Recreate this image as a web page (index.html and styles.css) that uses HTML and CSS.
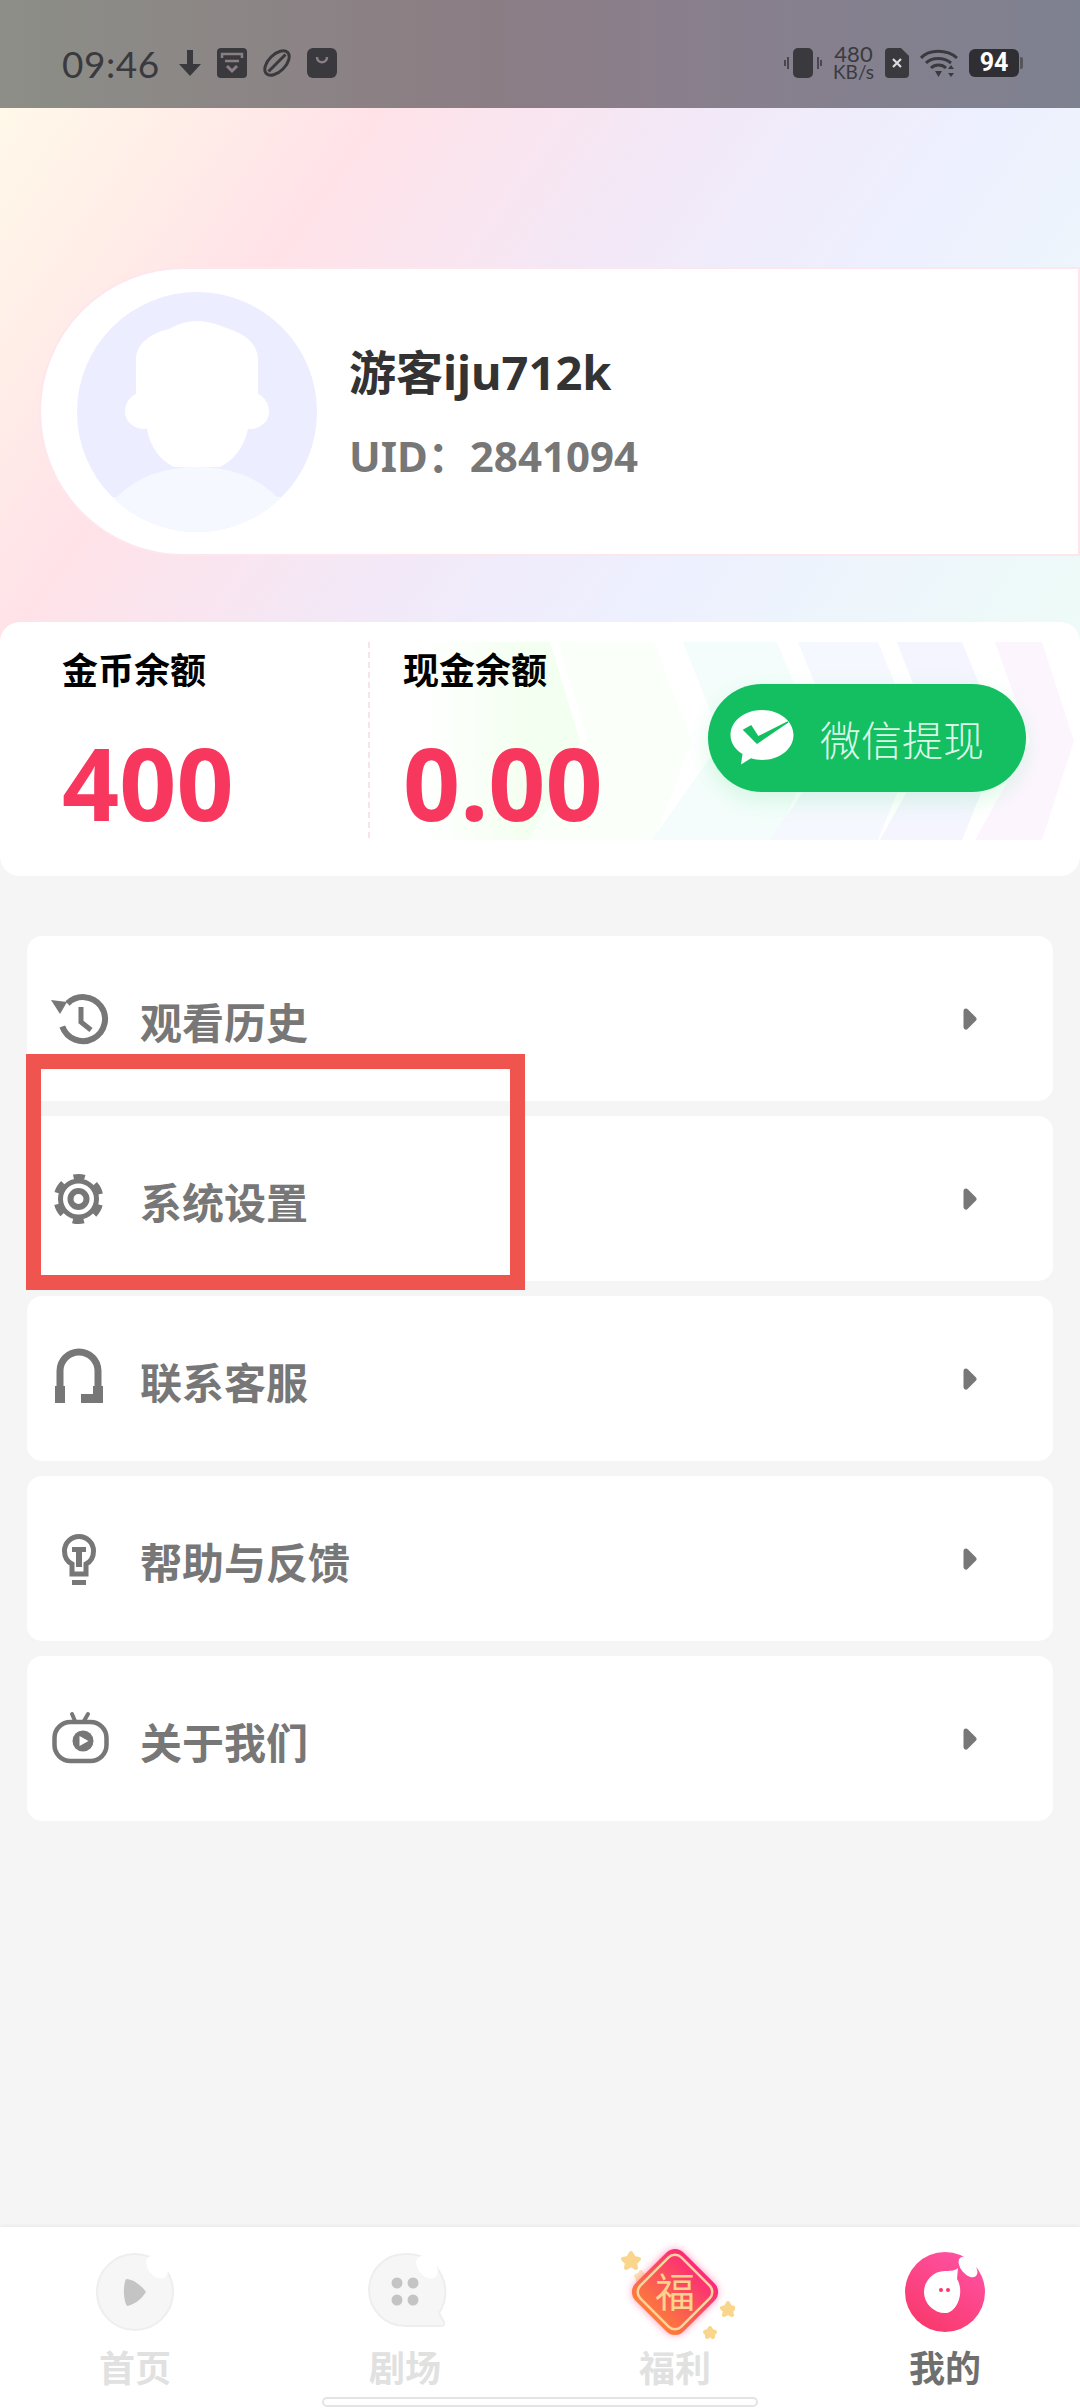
FILE: index.html
```html
<!DOCTYPE html>
<html lang="zh-CN">
<head>
  <meta charset="UTF-8" />
  <meta name="viewport" content="width=device-width, initial-scale=1.0"/>
  <title>我的</title>
  <link rel="stylesheet" href="styles.css">
</head>
<body>
  <!-- Status bar -->
  <header class="status-bar">
    <div class="status-left">
      <span class="clock">09:46</span>
      <svg class="st-icon" width="24" height="28" viewBox="0 0 24 28"><path d="M9 1h6v14h8L12 27 1 15h8z"/></svg>
      <svg class="st-icon" width="30" height="30" viewBox="0 0 30 30"><rect width="30" height="30" rx="4"/><path d="M5 10V6h20v4M8 13h14" fill="none" stroke="#8a7f85" stroke-width="2.5"/><path d="M10 18l5 5 5-5" fill="none" stroke="#8a7f85" stroke-width="3"/></svg>
      <svg class="st-icon" width="30" height="30" viewBox="0 0 30 30"><g transform="rotate(-45 15 15)"><ellipse cx="15" cy="15" rx="15" ry="8.5" fill="none" stroke="#3a3a3e" stroke-width="3"/><path d="M3 15h24" stroke="#3a3a3e" stroke-width="3"/></g></svg>
      <svg class="st-icon" width="30" height="30" viewBox="0 0 30 30"><rect width="30" height="30" rx="6"/><path d="M10 9c0 7 10 7 10 0" fill="none" stroke="#8a7f85" stroke-width="2.5"/></svg>
    </div>
    <div class="status-right">
      <svg class="st-icon" width="38" height="30" viewBox="0 0 38 30"><rect x="9" width="20" height="30" rx="5"/><path d="M4 9v12M1 12v6M34 9v12M37 12v6" stroke="#3a3a3e" stroke-width="1.6"/></svg>
      <div class="net-speed"><span>480</span><span class="net-unit">KB/s</span></div>
      <svg class="st-icon" width="24" height="30" viewBox="0 0 24 30"><path d="M4 0h12l8 8v18a4 4 0 0 1-4 4H4a4 4 0 0 1-4-4V4a4 4 0 0 1 4-4z"/><path d="M8 11l8 8M16 11l-8 8" stroke="#dcdcdc" stroke-width="2.2"/></svg>
      <svg class="st-icon" width="38" height="30" viewBox="0 0 38 30"><g fill="none" stroke="#3a3a3e" stroke-width="3"><path d="M1 10c8-9 26-9 36 0"/><path d="M6 15c6-6 18-6 25 0"/><path d="M11 20c4-4 11-4 15 0"/></g><path d="M15 23h7l-3.5 6zM31 17l3 4h-6zM31 29l3-4h-6z"/></svg>
      <div class="battery"><span>94</span></div>
    </div>
  </header>

  <!-- Profile header -->
  <section class="hero">
    <div class="user-card">
      <svg class="avatar" width="240" height="240" viewBox="0 0 240 240">
        <defs><clipPath id="avatarClip"><circle cx="120" cy="120" r="120"/></clipPath></defs>
        <circle cx="120" cy="120" r="120" fill="#eceeff"/>
        <g clip-path="url(#avatarClip)">
          <path d="M0 240V205H40Q70 175 120 175T200 205H240V240Z" fill="#f6f8ff"/>
        </g>
        <path d="M120 29C108 29 100 33 92 37C72 42 59 52 59 68V102C52 105 48 112 48 120C48 130 58 138 70 137C73 155 83 168 97 175H143C157 168 167 155 171 137C182 138 192 130 192 120C192 112 188 105 181 102V68C181 52 168 42 152 37C142 33 132 29 120 29Z" fill="#fff"/>
      </svg>
      <div class="user-info">
        <h1 class="user-name">游客iju712k</h1>
        <p class="user-id">UID：2841094</p>
      </div>
    </div>
  </section>

  <!-- Balances -->
  <section class="wallet">
    <svg class="wallet-bg" width="660" height="198" viewBox="0 0 660 198">
      <defs>
        <linearGradient id="fadeGreen" x1="0" x2="1"><stop offset="0" stop-color="#f4fff1" stop-opacity="0"/><stop offset="0.7" stop-color="#f3fff0"/></linearGradient>
      </defs>
      <polygon points="0,0 130,0 160,99 118,198 0,198" fill="url(#fadeGreen)"/>
      <polygon points="138,0 234,0 272,99 234,198 108,198 168,99" fill="#fafffa"/>
      <polygon points="263,0 357,0 397,99 357,198 232,198 302,99" fill="#f4fdfb"/>
      <polygon points="378,0 458,0 498,99 458,198 350,198 418,99" fill="#f5f8fe"/>
      <polygon points="477,0 542,0 582,99 542,198 460,198 515,99" fill="#f4f5fe"/>
      <polygon points="575,0 622,0 654,99 622,198 555,198 610,99" fill="#fdf5fe"/>
    </svg>
    <div class="balance">
      <div class="balance-label">金币余额</div>
      <div class="balance-value">400</div>
    </div>
    <div class="balance balance-cash">
      <div class="balance-label">现金余额</div>
      <div class="balance-value">0.00</div>
    </div>
    <button class="wechat-btn" type="button">
      <svg width="64" height="56" viewBox="0 0 64 56">
        <path d="M32 0C49.500 0 63.500 11 63.500 25S49.500 50 32 50C28 50 24.500 49.500 21 48.300L11 54.500L12.500 44C5 39.500 .5 32.700 .5 25C.5 11 14.500 0 32 0Z" fill="#fff"/>
        <path d="M14 20L27 33L58 12L28 27L21 16Z" fill="#13bf61" stroke="#13bf61" stroke-width="1.500"/>
      </svg>
      <span>微信提现</span>
    </button>
  </section>

  <!-- Menu -->
  <ul class="menu">
    <li class="menu-item">
      <svg class="menu-icon" width="64" height="64" viewBox="0 0 64 64">
        <path d="M16.500 16.500A22 22 0 1 1 11.300 39.500" fill="none" stroke="#777" stroke-width="6"/>
        <polygon points="0,13 16,15 9,27" fill="#777"/>
        <path d="M30 20V35L40 43" fill="none" stroke="#777" stroke-width="5"/>
      </svg>
      <span class="menu-text">观看历史</span>
      <svg class="menu-arrow" width="14" height="22" viewBox="0 0 14 22"><path d="M3 3l8 8-8 8z" fill="#777" stroke="#777" stroke-width="5" stroke-linejoin="round"/></svg>
    </li>
    <li class="menu-item">
      <svg class="menu-icon" width="64" height="64" viewBox="0 0 64 64">
        <g fill="none" stroke="#777">
          <circle cx="27.500" cy="32" r="18" stroke-width="5"/>
          <circle cx="27.500" cy="32" r="22.500" stroke-width="5" stroke-dasharray="11.500 12.060" stroke-dashoffset="-6"/>
          <circle cx="27.500" cy="32" r="8" stroke-width="6"/>
        </g>
      </svg>
      <span class="menu-text">系统设置</span>
      <svg class="menu-arrow" width="14" height="22" viewBox="0 0 14 22"><path d="M3 3l8 8-8 8z" fill="#777" stroke="#777" stroke-width="5" stroke-linejoin="round"/></svg>
    </li>
    <li class="menu-item">
      <svg class="menu-icon" width="64" height="64" viewBox="0 0 64 64">
        <path d="M9 42V24A19 19 0 0 1 47 24V46" fill="none" stroke="#777" stroke-width="7"/>
        <path d="M4 39H14V56H4ZM42 39H52V56H30V47H42Z" fill="#777"/>
      </svg>
      <span class="menu-text">联系客服</span>
      <svg class="menu-arrow" width="14" height="22" viewBox="0 0 14 22"><path d="M3 3l8 8-8 8z" fill="#777" stroke="#777" stroke-width="5" stroke-linejoin="round"/></svg>
    </li>
    <li class="menu-item">
      <svg class="menu-icon" width="64" height="64" viewBox="0 0 64 64">
        <path d="M21 37C15 34 13.500 29 13.500 24A14.500 14.500 0 0 1 42.500 24C42.500 29 41 34 35 37V47H21Z" fill="none" stroke="#777" stroke-width="5"/>
        <path d="M21 20H35V25H31V40H25V25H21ZM21 53H35V58H21Z" fill="#777"/>
      </svg>
      <span class="menu-text">帮助与反馈</span>
      <svg class="menu-arrow" width="14" height="22" viewBox="0 0 14 22"><path d="M3 3l8 8-8 8z" fill="#777" stroke="#777" stroke-width="5" stroke-linejoin="round"/></svg>
    </li>
    <li class="menu-item">
      <svg class="menu-icon" width="64" height="64" viewBox="0 0 64 64">
        <rect x="3.500" y="15" width="52" height="39" rx="16" fill="none" stroke="#777" stroke-width="4.500"/>
        <path d="M24 14L21 7M33 14L37 7" stroke="#777" stroke-width="4" stroke-linecap="round"/>
        <circle cx="32" cy="34" r="10.500" fill="#777"/>
        <path d="M28.500 29L37.500 34L28.500 39Z" fill="#fff"/>
      </svg>
      <span class="menu-text">关于我们</span>
      <svg class="menu-arrow" width="14" height="22" viewBox="0 0 14 22"><path d="M3 3l8 8-8 8z" fill="#777" stroke="#777" stroke-width="5" stroke-linejoin="round"/></svg>
    </li>
  </ul>

  <!-- Callout around the settings row -->
  <div class="callout"></div>

  <!-- Bottom tabs -->
  <nav class="tabbar">
    <a class="tab">
      <svg width="100" height="100" viewBox="0 0 100 100">
        <circle cx="50" cy="50" r="38" fill="#f6f6f6" stroke="#eeeeee" stroke-width="2"/>
        <ellipse cx="72" cy="25" rx="9" ry="13" transform="rotate(-40 72 25)" fill="#fff"/>
        <path d="M41 37C48 37 56 43 61 50C56 58 48 63 42 64C38 58 38 43 41 37Z" fill="#c4c4c4"/>
      </svg>
      <span>首页</span>
    </a>
    <a class="tab">
      <svg width="100" height="100" viewBox="0 0 100 100">
        <path d="M50 12A38 38 0 0 1 84 71L89 80Q90 84 86 84H50A36 36 0 0 1 50 12Z" fill="#f6f6f6" stroke="#eeeeee" stroke-width="2"/>
        <ellipse cx="72" cy="25" rx="9" ry="13" transform="rotate(-40 72 25)" fill="#fff"/>
        <g fill="#c4c4c4"><circle cx="42" cy="41" r="5.500"/><circle cx="58" cy="41" r="5.500"/><circle cx="42" cy="58" r="5.500"/><circle cx="58" cy="58" r="5.500"/></g>
      </svg>
      <span>剧场</span>
    </a>
    <a class="tab">
      <svg class="fu-icon" width="120" height="100" viewBox="0 0 120 100">
        <defs>
          <linearGradient id="fuFill" x1="0" y1="0" x2="0" y2="1"><stop offset="0" stop-color="#fb2a78"/><stop offset="1" stop-color="#fc7d3a"/></linearGradient>
          <filter id="fuGlow" x="-30%" y="-30%" width="160%" height="160%"><feGaussianBlur stdDeviation="4"/></filter>
        </defs>
        <g fill="#f9d68c" stroke="#f9d68c" stroke-linejoin="round" stroke-width="4">
          <polygon points="16,11 19,16 24,17 20,21 21,26 16,23 11,26 12,21 8,17 13,16"/>
          <polygon points="123,0 123,0 123,0" opacity="0"/>
          <polygon points="26,30 28,33 31,34 29,36 29,39 26,37 23,39 23,36 21,34 24,33" opacity="0.6"/>
          <polygon points="118,62 120,66 124,67 121,70 122,74 118,72 114,74 115,70 112,67 116,66" transform="translate(-5 -1)"/>
          <polygon points="95,86 97,89 100,90 98,92 98,95 95,93 92,95 92,92 90,90 93,89"/>
        </g>
        <rect x="27" y="17" width="66" height="66" rx="12" transform="rotate(45 60 50)" fill="#ff3d86" opacity="0.7" filter="url(#fuGlow)"/>
        <rect x="26" y="16" width="68" height="68" rx="12" transform="rotate(45 60 50)" fill="url(#fuFill)"/>
        <rect x="31" y="21" width="58" height="58" rx="9" transform="rotate(45 60 50)" fill="none" stroke="#fcd4a0" stroke-width="2.500"/>
        <text x="60" y="65" text-anchor="middle" class="fu-text">福</text>
      </svg>
      <span>福利</span>
    </a>
    <a class="tab tab-active">
      <svg width="100" height="100" viewBox="0 0 100 100">
        <defs><linearGradient id="meFill" x1="0.800" y1="0" x2="0.200" y2="1"><stop offset="0" stop-color="#ff52a4"/><stop offset="1" stop-color="#f9386a"/></linearGradient></defs>
        <circle cx="50" cy="50" r="40" fill="url(#meFill)"/>
        <ellipse cx="73" cy="25" rx="7" ry="12" transform="rotate(-40 73 25)" fill="#fff"/>
        <path d="M50 29C54 29 60 29 63 26L62 37C70 50 62 71 50 71A21 21 0 0 1 50 29Z" fill="#fff"/>
        <circle cx="46" cy="48" r="2" fill="#f9386a"/>
        <circle cx="53" cy="48" r="2" fill="#f9386a"/>
      </svg>
      <span>我的</span>
    </a>
    <div class="home-bar"></div>
  </nav>
</body>
</html>
```

FILE: styles.css
```css
* {
  box-sizing: border-box;
}

body {
  font-family: "Noto Sans", "Noto Sans CJK SC", sans-serif;
  margin: 0;
  width: 1080px;
  height: 2408px;
  display: flex;
  flex-direction: column;
  position: relative;
  background: #f5f5f5;
  overflow: hidden;
}

/* Status bar */
.status-bar {
  height: 108px;
  padding: 46px 61px 0 62px;
  display: flex;
  justify-content: space-between;
  align-items: flex-start;
  background: linear-gradient(90deg, #8c8e87 0%, #8b7d84 45%, #897f8d 65%, #7e8190 100%);
  color: #3a3a3e;
}

.status-left,
.status-right {
  display: flex;
  align-items: center;
  height: 34px;
}

.status-left {
  gap: 15px;
}

.status-right {
  gap: 11px;
}

.clock {
  font-family: "Lato", sans-serif;
  font-size: 37px;
  letter-spacing: 0.5px;
  margin-right: 3px;
}

.st-icon {
  fill: #3a3a3e;
}

.net-speed {
  display: flex;
  flex-direction: column;
  align-items: center;
  font-family: "Lato", sans-serif;
  font-size: 22px;
  line-height: 18px;
}

.net-unit {
  font-size: 19px;
}

.battery {
  width: 50px;
  height: 28px;
  border-radius: 6px;
  background: #2f2f33;
  color: #fff;
  font-family: "Liberation Sans Narrow", "Roboto", sans-serif;
  font-size: 25px;
  font-weight: bold;
  line-height: 28px;
  text-align: center;
  position: relative;
}

.battery::after {
  content: "";
  position: absolute;
  right: -4px;
  top: 8px;
  width: 3px;
  height: 12px;
  border-radius: 0 2px 2px 0;
  background: #55555a;
}

/* Profile header */
.hero {
  height: 534px;
  padding: 159px 0 0 39px;
  margin-bottom: -20px;
  background: linear-gradient(125deg, #fff9e9 0%, #ffe2e8 26%, #f3e8f7 48%, #edf0ff 68%, #eefbf7 100%);
}

.user-card {
  height: 289px;
  padding-left: 36px;
  display: flex;
  align-items: center;
  gap: 32px;
  background: #fff;
  border: 2px solid #fde6ec;
  border-left-color: #fde6ec;
  border-radius: 145px 0 0 145px;
}

.user-name {
  margin: 0 0 20px;
  font-size: 47px;
  font-weight: bold;
  line-height: 68px;
  color: #333;
}

.user-id {
  margin: 0;
  font-size: 42px;
  font-weight: bold;
  line-height: 60px;
  color: #777;
}

/* Balances */
.wallet {
  position: relative;
  height: 254px;
  padding: 20px 0 0 62px;
  display: flex;
  background: #fff;
  border-radius: 20px;
}

.wallet-bg {
  position: absolute;
  left: 420px;
  top: 20px;
}

.balance {
  position: relative;
  width: 306px;
}

.balance-cash {
  padding-left: 35px;
}

.balance-cash::before {
  content: "";
  position: absolute;
  left: 0;
  top: 0;
  height: 196px;
  border-left: 2px dashed #f6e4ea;
}

.balance-label {
  font-family: "Noto Sans CJK SC", sans-serif;
  font-size: 36px;
  font-weight: bold;
  line-height: 52px;
  color: #000;
}

.balance-value {
  margin-top: 30px;
  font-size: 100px;
  font-weight: bold;
  line-height: 116px;
  color: #f8375e;
}

.wechat-btn {
  position: absolute;
  left: 708px;
  top: 62px;
  width: 318px;
  height: 108px;
  padding: 0 0 0 22px;
  display: flex;
  align-items: center;
  gap: 26px;
  border: none;
  border-radius: 54px;
  background: #13bf61;
  box-shadow: 0 8px 22px rgba(60, 220, 120, 0.18);
  font-family: "Noto Sans CJK SC", sans-serif;
  font-size: 41px;
  font-weight: 300;
  color: #dcf8e7;
}

/* Menu */
.menu {
  list-style: none;
  margin: 60px 27px 0;
  padding: 0;
  display: flex;
  flex-direction: column;
  gap: 15px;
}

.menu-item {
  height: 165px;
  padding: 0 76px 0 24px;
  display: flex;
  align-items: center;
  background: #fff;
  border-radius: 15px;
}

.menu-icon {
  flex: none;
}

.menu-text {
  margin-left: 25px;
  padding-top: 4px;
  flex: 1;
  font-family: "Noto Sans CJK SC", sans-serif;
  font-size: 42px;
  font-weight: bold;
  color: #777;
}

.callout {
  position: absolute;
  left: 26px;
  top: 1054px;
  width: 499px;
  height: 236px;
  border: 15px solid #f0544e;
}

/* Bottom tabs */
.tabbar {
  position: absolute;
  left: 0;
  right: 0;
  bottom: 0;
  height: 181px;
  padding-top: 15px;
  display: grid;
  grid-template-columns: repeat(4, 270px);
  background: #fff;
  box-shadow: 0 -1px 4px rgba(0, 0, 0, 0.06);
}

.tab {
  display: flex;
  flex-direction: column;
  align-items: center;
  font-family: "Noto Sans CJK SC", sans-serif;
  font-size: 36px;
  font-weight: bold;
  line-height: 50px;
  color: #e1e1e1;
}

.tab span {
  margin-top: -1px;
}

.tab-active {
  color: #6f6f6f;
}

.fu-text {
  font-family: "Noto Sans CJK SC", sans-serif;
  font-size: 40px;
  font-weight: normal;
  fill: #fcd38b;
}

.home-bar {
  position: absolute;
  left: 322px;
  bottom: 1px;
  width: 436px;
  height: 10px;
  background: #fff;
  border: 2px solid #e4e4e4;
  border-radius: 5px;
}
```
